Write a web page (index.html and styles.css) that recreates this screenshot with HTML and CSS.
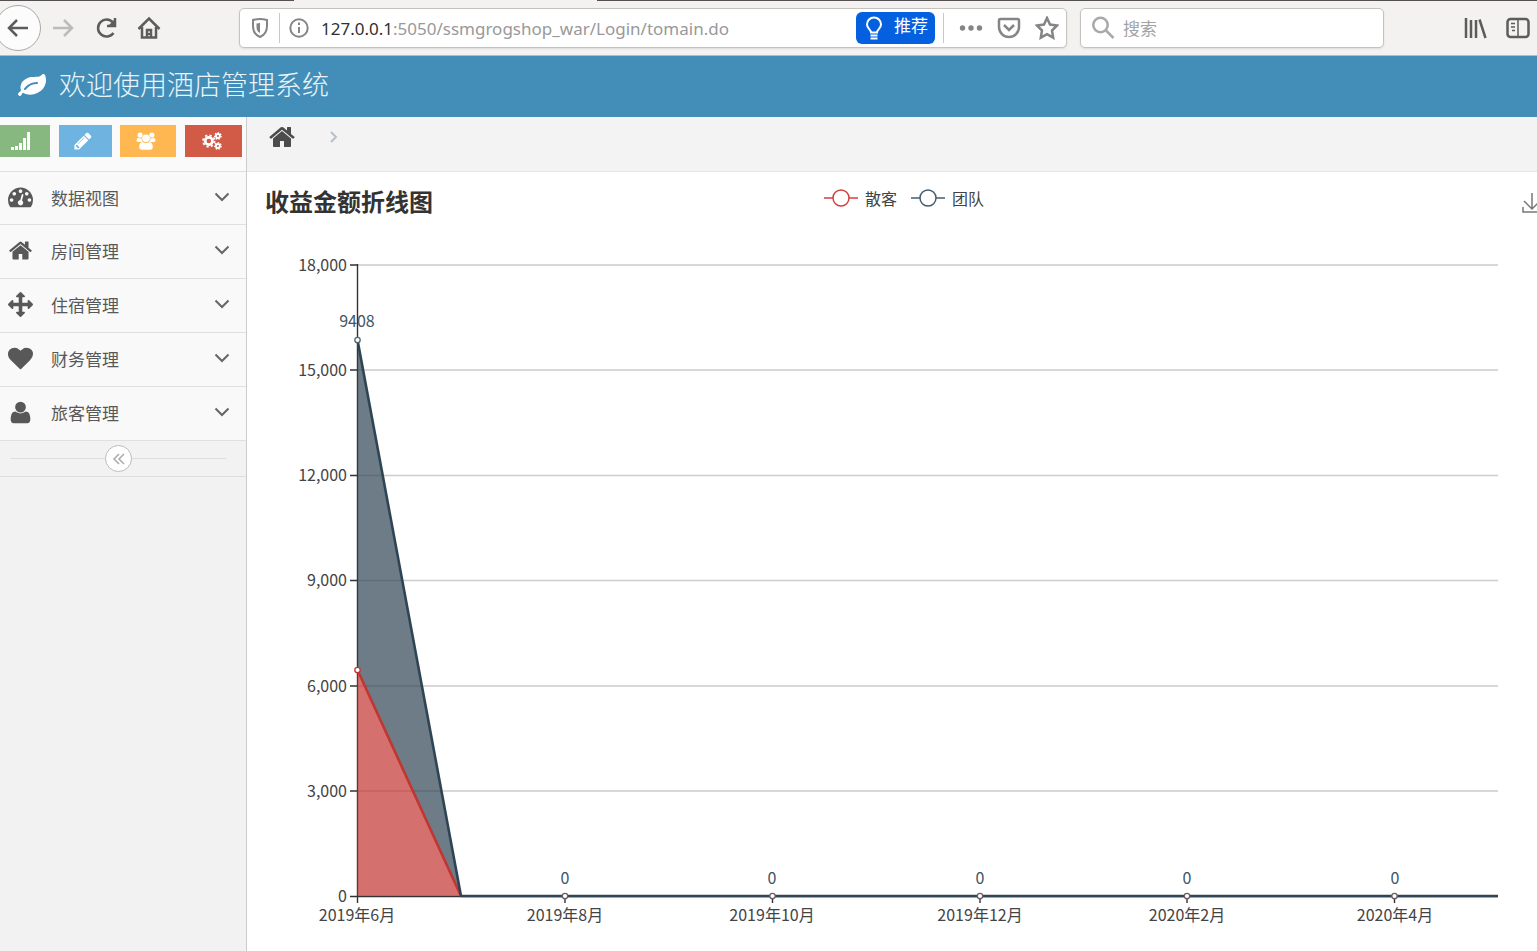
FILE: index.html
```html
<!DOCTYPE html>
<html lang="zh-CN">
<head>
<meta charset="utf-8">
<title>酒店管理系统</title>
<link rel="stylesheet" href="styles.css">
</head>
<body>
<svg class="defs" aria-hidden="true">
  <symbol id="home" viewBox="0 0 1664 1792"><path d="M1408 992v480q0 26-19 45t-45 19h-384v-384h-256v384h-384q-26 0-45-19t-19-45v-480q0-1 .5-3t.5-3l575-474 575 474q1 2 1 6zm223-69l-62 74q-8 9-21 11h-3q-13 0-21-7l-692-577-692 577q-12 8-24 7-13-2-21-11l-62-74q-8-10-7-23.5t11-21.5l719-599q32-26 76-26t76 26l244 204v-195q0-14 9-23t23-9h192q14 0 23 9t9 23v408l219 182q10 8 11 21.5t-7 23.5z"/></symbol>
  <symbol id="chevron" viewBox="0 0 16 16"><path d="M1.500 4.500 8 11l6.500-6.500" fill="none" stroke="currentColor" stroke-width="2"/></symbol>
</svg>

<div class="browser">
  <div class="tabline"><span class="tab-left"></span><span class="tab-right"></span></div>
  <div class="toolbar">
    <div class="nav-buttons">
      <button class="back" aria-label="后退"><svg viewBox="0 0 24 24"><path d="M22 12H3M11 4l-8 8 8 8"/></svg></button>
      <button class="tool forward" aria-label="前进"><svg viewBox="0 0 24 24"><path d="M2 12h19M13 4l8 8-8 8"/></svg></button>
      <button class="tool reload" aria-label="刷新"><svg viewBox="0 0 24 24"><path d="M19 6.500A8.500 8.500 0 1 0 19.500 17M21 2v8h-8"/><path class="solid" d="M21 3v7h-7z"/></svg></button>
      <button class="tool homebtn" aria-label="主页"><svg viewBox="0 0 24 24"><path d="M1.500 13 12 2.500 22.500 13M5 11v10.500h14V11"/><path d="M10 21v-7h4v7M12 17v2"/></svg></button>
    </div>
    <div class="urlbar">
      <svg class="shield" viewBox="0 0 20 22"><path d="M10 2c3 0 5 .5 7 1v6c0 6-2 9-7 11-5-2-7-5-7-11V3c2-.5 4-1 7-1z"/><path class="solid" d="M10 6c-1.500 0-2.500.2-3.500.5V10c0 3 1 5 3.500 6z"/></svg>
      <span class="divider"></span>
      <svg class="info" viewBox="0 0 22 22"><circle cx="11" cy="11" r="8.700"/><path d="M11 10v6M11 5.500v2.500"/></svg>
      <label class="url"><span class="host">127.0.0.1</span>:5050/ssmgrogshop_war/Login/tomain.do</label>
      <button class="suggest"><svg viewBox="0 0 20 24"><path d="M7 16.500c0-3-4-4-4-8a7 7 0 0 1 14 0c0 4-4 5-4 8zM6.500 19.500h7M6.500 22.500h7"/></svg><span>推荐</span></button>
      <span class="divider"></span>
      <button class="tool dots" aria-label="更多"><svg viewBox="0 0 24 24"><circle cx="3.500" cy="12" r="2.700"/><circle cx="12" cy="12" r="2.700"/><circle cx="20.500" cy="12" r="2.700"/></svg></button>
      <button class="tool grey pocket" aria-label="保存到 Pocket"><svg viewBox="0 0 24 24"><path d="M3.500 3h17q1.500 0 1.500 1.500V11a10 10 0 0 1-20 0V4.500Q2 3 3.500 3zM7 9l5 5 5-5"/></svg></button>
      <button class="tool grey star" aria-label="书签"><svg viewBox="0 0 24 24"><path d="m12 2 3 6.500 7 1-5 5 1.200 7.200L12 18.200l-6.200 3.500L7 14.500l-5-5 7-1z"/></svg></button>
    </div>
    <div class="search">
      <svg viewBox="0 0 24 24"><circle cx="9.500" cy="9" r="7.200"/><path d="m15 14.500 7.500 7.500"/></svg>
      <input type="search" aria-label="搜索" placeholder="搜索">
    </div>
    <div class="right-tools">
      <button class="tool library" aria-label="我的足迹"><svg viewBox="0 0 24 24"><path d="M3 2v20M8 4v18M13 4v18M16.500 3.500l6 18.500"/></svg></button>
      <button class="tool panel" aria-label="侧栏"><svg viewBox="0 0 24 24"><rect x="1.500" y="3" width="21" height="18" rx="3"/><path class="thin" d="M12 3v18M5 7.500h4M5 11h4M6 14.500h3"/></svg></button>
    </div>
  </div>
</div>

<header class="app-header">
  <svg viewBox="0 0 1792 1792" aria-hidden="true"><path d="M1280 704q0-26-19-45t-45-19q-172 0-318 49.500t-259.500 134-235.500 219.500q-19 21-19 45 0 26 19 45t45 19q24 0 45-19 27-24 74-71t67-66q137-124 268.500-176t313.500-52q26 0 45-19t19-45zm512-198q0 95-20 193-46 224-184.500 383t-357.500 268q-214 108-438 108-148 0-286-47-15-5-88-42t-96-37q-16 0-39.500 32t-45 70-52.500 70-60 32q-43 0-63.500-17.500t-45.500-59.500q-2-4-6-11t-5.500-10-3-9.500-1.500-13.500q0-35 31-73.500t68-65.500 68-56 31-48q0-4-14-38t-16-44q-9-51-9-104 0-115 43.500-220t119-184.500 170.500-139 204-95.500q55-18 145-25.500t179.500-9 178.500-6 163.500-24 113.500-56.500l29.500-29.500 29.500-28 27-20 36.500-16 43.500-4.500q39 0 70.500 46t47.500 112 24 124 8 96z"/></svg>
  <h1>欢迎使用酒店管理系统</h1>
</header>

<div class="layout">
  <aside class="sidebar">
    <div class="shortcuts">
      <button class="green" aria-label="统计"><svg viewBox="0 0 20 20"><path d="M0 16h3v3H0zM4 15h3v4H4zM8 12h3v7H8zM12 7h3v12h-3zM16 1h3v18h-3z"/></svg></button>
      <button class="blue" aria-label="编辑"><svg viewBox="0 0 1792 1792"><path d="M491 1536l91-91-235-235-91 91v107h128v128h107zm523-928q0-22-22-22-10 0-17 7l-542 542q-7 7-7 17 0 22 22 22 10 0 17-7l542-542q7-7 7-17zm-54-192l416 416-832 832h-416v-416zm683 96q0 53-37 90l-166 166-416-416 166-165q36-38 90-38 53 0 91 38l235 234q37 39 37 91z"/></svg></button>
      <button class="orange" aria-label="用户"><svg viewBox="0 0 22 20"><circle cx="4.500" cy="3.500" r="2.800"/><circle cx="17.500" cy="3.500" r="2.800"/><circle cx="11" cy="7" r="4.200"/><path d="M2.500 6.500Q4.500 8 6 6.700q0 3 1.500 4.300H2.200Q.5 11 .5 9.500q0-2.500 2-3zM19.500 6.500Q17.500 8 16 6.700q0 3-1.500 4.300h5.300q1.700 0 1.700-1.500 0-2.500-2-3zM7 11q4 2.500 8 0 3.500.5 3.500 6 0 2.500-2.500 2.500H6q-2.500 0-2.500-2.500 0-5.500 3.500-6z"/></svg></button>
      <button class="red" aria-label="设置"><svg class="cogs" viewBox="0 0 22 20"><circle cx="7.500" cy="10" r="4" stroke-width="3"/><circle cx="7.500" cy="10" r="6.300" stroke-width="2" stroke-dasharray="2.470 2.470"/><circle cx="17.500" cy="4.500" r="2.200" stroke-width="2"/><circle cx="17.500" cy="4.500" r="3.500" stroke-width="1.500" stroke-dasharray="1.570 1.570"/><circle cx="17.500" cy="15.500" r="2.200" stroke-width="2"/><circle cx="17.500" cy="15.500" r="3.500" stroke-width="1.500" stroke-dasharray="1.570 1.570"/></svg></button>
    </div>
    <nav>
      <ul class="menu">
        <li><a href="#"><svg class="icon" viewBox="0 0 1792 1792"><path d="M384 1152q0-53-37.500-90.500t-90.500-37.500-90.500 37.500-37.500 90.500 37.500 90.500 90.500 37.500 90.500-37.500 37.500-90.500zm192-448q0-53-37.500-90.500t-90.500-37.500-90.500 37.500-37.500 90.500 37.500 90.500 90.500 37.500 90.500-37.500 37.500-90.500zm428 481l101-382q6-26-7.500-48.500t-38.500-29.500-48 6.500-30 39.500l-101 382q-60 5-107 43.500t-63 98.500q-20 77 20 146t117 89 146-20 89-117q16-60-6-117t-72-91zm660-33q0-53-37.500-90.500t-90.500-37.500-90.500 37.500-37.500 90.500 37.500 90.500 90.500 37.500 90.500-37.500 37.500-90.500zm-640-640q0-53-37.500-90.500t-90.500-37.500-90.500 37.500-37.500 90.500 37.500 90.500 90.500 37.500 90.500-37.500 37.500-90.500zm448 192q0-53-37.500-90.500t-90.500-37.500-90.500 37.500-37.500 90.500 37.500 90.500 90.500 37.500 90.500-37.500 37.500-90.500zm320 448q0 261-141 483-19 29-54 29h-1402q-35 0-54-29-141-221-141-483 0-182 71-348t191-286 286-191 348-71 348 71 286 191 191 286 71 348z"/></svg><span>数据视图</span><svg class="arrow"><use href="#chevron"/></svg></a></li>
        <li><a href="#"><svg class="icon"><use href="#home"/></svg><span>房间管理</span><svg class="arrow"><use href="#chevron"/></svg></a></li>
        <li><a href="#"><svg class="icon" viewBox="0 0 1792 1792"><path d="M1792 896q0 26-19 45l-256 256q-19 19-45 19t-45-19-19-45v-128h-384v384h128q26 0 45 19t19 45-19 45l-256 256q-19 19-45 19t-45-19l-256-256q-19-19-19-45t19-45 45-19h128v-384h-384v128q0 26-19 45t-45 19-45-19l-256-256q-19-19-19-45t19-45l256-256q19-19 45-19t45 19 19 45v128h384v-384h-128q-26 0-45-19t-19-45 19-45l256-256q19-19 45-19t45 19l256 256q19 19 19 45t-19 45-45 19h-128v384h384v-128q0-26 19-45t45-19 45 19l256 256q19 19 19 45z"/></svg><span>住宿管理</span><svg class="arrow"><use href="#chevron"/></svg></a></li>
        <li><a href="#"><svg class="icon" viewBox="0 0 1792 1792"><path d="M896 1664q-26 0-44-18l-624-602q-10-8-27.500-26t-55.500-65.500-68-97.500-53.500-121-23.500-138q0-220 127-344t351-124q62 0 126.500 21.500t120 58 95.500 68.500 76 68q36-36 76-68t95.500-68.500 120-58 126.500-21.500q224 0 351 124t127 344q0 221-229 450l-623 600q-18 18-44 18z"/></svg><span>财务管理</span><svg class="arrow"><use href="#chevron"/></svg></a></li>
        <li><a href="#"><svg class="icon" viewBox="0 0 1792 1792"><path d="M1600 1399q0 109-62.500 187t-150.500 78h-982q-88 0-150.500-78t-62.500-187q0-85 8.500-160.500t31.500-152 58.500-131 94-89 134.500-34.500q160 128 377 128t377-128q76 0 134.500 34.500t94 89 58.500 131 31.500 152 8.500 160.500zm-320-887q0 159-112.500 271.500t-271.500 112.500-271.500-112.500-112.500-271.500 112.500-271.500 271.500-112.500 271.500 112.500 112.500 271.500z"/></svg><span>旅客管理</span><svg class="arrow"><use href="#chevron"/></svg></a></li>
      </ul>
    </nav>
    <div class="collapse">
      <button aria-label="收起菜单"><svg viewBox="0 0 16 16"><path d="M8 3 3 8l5 5M13 3 8 8l5 5"/></svg></button>
    </div>
  </aside>

  <main class="content">
    <div class="breadcrumb">
      <a href="#" aria-label="首页"><svg class="crumb-home"><use href="#home"/></svg></a>
      <svg class="crumb-sep" viewBox="0 0 10 14"><path d="m2 2 5 5-5 5"/></svg>
    </div>
    <svg class="chart" viewBox="0 0 1290 779" role="img" aria-label="收益金额折线图">
      <text class="title" x="18" y="39">收益金额折线图</text>
      <g class="legend">
        <path class="red-line" d="M577 26h34"/><circle class="red-line" cx="594" cy="26" r="8"/>
        <text x="618" y="33">散客</text>
        <path class="navy-line" d="M664 26h34"/><circle class="navy-line" cx="681" cy="26" r="8"/>
        <text x="705" y="33">团队</text>
      </g>
      <path class="download" d="M1285 21v16M1277 29l8 8 8-8M1276 35v5h18v-5"/>
      <path class="grid" d="M110 93h1141M110 198h1141M110 303.500h1141M110 408.500h1141M110 514h1141M110 619h1141"/>
      <path class="axis" d="M110.500 92v639M103 93h7M103 198h7M103 303.500h7M103 408.500h7M103 514h7M103 619h7M103 724.500h1148M318 724v7M525.500 724v7M733 724v7M940 724v7M1147.500 724v7"/>
      <path class="red-area" d="M110.500 498 214 724H110.500z"/>
      <path class="navy-area" d="M110.500 168 214 724 110.500 498z"/>
      <path class="red-series" d="M110.500 498 214 724"/>
      <path class="navy-series" d="M110.500 168 214 724H1251"/>
      <g class="ylabels">
        <text x="100" y="99">18,000</text><text x="100" y="204">15,000</text><text x="100" y="309">12,000</text>
        <text x="100" y="414">9,000</text><text x="100" y="520">6,000</text><text x="100" y="625">3,000</text><text x="100" y="730">0</text>
      </g>
      <g class="xlabels">
        <text x="110" y="749">2019年6月</text><text x="318" y="749">2019年8月</text><text x="525" y="749">2019年10月</text>
        <text x="733" y="749">2019年12月</text><text x="940" y="749">2020年2月</text><text x="1148" y="749">2020年4月</text>
      </g>
      <g class="values">
        <text x="110" y="155">9408</text><text x="318" y="712">0</text><text x="525" y="712">0</text>
        <text x="733" y="712">0</text><text x="940" y="712">0</text><text x="1148" y="712">0</text>
      </g>
      <circle class="dot red-dot" cx="110.500" cy="498" r="2.700"/>
      <circle class="dot" cx="110.500" cy="168" r="2.700"/>
      <g class="dot zero"><circle cx="318" cy="724" r="2.700"/><circle cx="525.500" cy="724" r="2.700"/><circle cx="733" cy="724" r="2.700"/><circle cx="940" cy="724" r="2.700"/><circle cx="1147.500" cy="724" r="2.700"/></g>
    </svg>
  </main>
</div>
</body>
</html>
```

FILE: styles.css
```css
* { box-sizing: border-box; }

body {
  margin: 0;
  min-height: 100vh;
  display: flex;
  flex-direction: column;
  overflow-x: hidden;
  background: #fff;
  color: #585858;
  font-family: "Noto Sans CJK SC", sans-serif;
}

button { padding: 0; border: 0; background: none; font: inherit; color: inherit; }
svg { display: block; flex: none; fill: currentColor; }
.defs { position: absolute; width: 0; height: 0; }

/* Browser chrome */
.browser { background: #f3f2f0; border-bottom: 1px solid #b9b9b7; }
.tabline { display: flex; justify-content: space-between; height: 1px; }
.tab-left { width: 294px; background: #544f50; }
.tab-right { width: calc(100% - 597px); background: #544f50; }
.toolbar { display: flex; align-items: center; height: 54px; }
.toolbar svg { width: 24px; height: 24px; fill: none; stroke: currentColor; stroke-width: 2.5; }
.nav-buttons { display: flex; align-items: center; width: 239px; color: #5d5c5b; }
.back {
  display: flex;
  align-items: center;
  justify-content: center;
  width: 46px;
  height: 46px;
  margin-left: -5px;
  border: 1px solid #aaa9a8;
  border-radius: 50%;
  background: #fcfcfc;
}
.forward { margin-left: 10px; color: #bcbbb9; }
.reload { margin-left: 19px; }
.homebtn { margin-left: 19px; }
.toolbar .solid { fill: currentColor; stroke: none; }

.urlbar, .search {
  display: flex;
  align-items: center;
  height: 40px;
  border: 1px solid #c4c3c1;
  border-radius: 5px;
  background: #fff;
  box-shadow: 0 1px 2px #dddcda;
}
.urlbar { flex: 1 1 828px; color: #858585; }
.toolbar .shield { width: 20px; height: 22px; margin-left: 10px; stroke-width: 2; }
.divider { width: 1px; height: 30px; margin-left: 9px; background: #c9c9c9; }
.suggest + .divider { margin-left: 8px; }
.toolbar .info { width: 22px; height: 22px; margin-left: 8px; stroke-width: 2; }
.url {
  flex: 1;
  margin-left: 11px;
  font: 17px "Noto Sans", sans-serif;
  color: #999;
  white-space: nowrap;
}
.host { color: #303030; }
.suggest {
  display: flex;
  align-items: center;
  gap: 10px;
  width: 79px;
  height: 32px;
  padding-left: 8px;
  border-radius: 6px;
  background: #0560df;
  color: #fff;
  font-size: 17px;
  line-height: 28px;
}
.suggest span { margin-bottom: 6px; }
.toolbar .suggest svg { width: 20px; height: 24px; stroke-width: 2; }
.toolbar .dots { margin-left: 15px; }
.toolbar .dots svg { fill: currentColor; stroke: none; }
.pocket, .star { margin-left: 14px; }
.star { margin-right: 7px; }
.search { flex: 0 0 304px; margin-left: 13px; padding-left: 10px; color: #a9a9a9; }
.search input {
  flex: 1;
  min-width: 0;
  margin: 0 0 2px 8px;
  padding: 0;
  border: 0;
  outline: 0;
  background: none;
  font: 17px "Noto Sans CJK SC", sans-serif;
}
.search input::placeholder { color: #a3a3a3; }
.right-tools { display: flex; gap: 19px; margin-left: 79px; padding-right: 7px; color: #5d5c5b; }
.toolbar .thin { stroke-width: 1.5; }

/* Application header */
.app-header {
  display: flex;
  align-items: center;
  gap: 13px;
  height: 61px;
  padding: 0 0 2px 18px;
  background: #438eb9;
  color: #fff;
}
.app-header svg { width: 28px; height: 28px; }
.app-header h1 { margin: 0 0 4px; font-size: 27px; line-height: 40px; font-weight: 300; color: #e9f4fb; }

/* Sidebar */
.layout { flex: 1; display: flex; }
.sidebar { flex: 0 0 247px; background: #f2f2f2; border-right: 1px solid #ccc; }
.shortcuts {
  display: grid;
  grid-template-columns: 50px 53px 56px 57px;
  justify-content: space-between;
  height: 54px;
  padding: 8px 4px 14px 0;
  background: #fafafa;
}
.shortcuts button { display: flex; align-items: center; justify-content: center; color: #fff; }
.shortcuts svg { width: 20px; height: 20px; }
.shortcuts .green { padding-right: 8px; background: #87b87f; }
.shortcuts .blue { padding-right: 4px; background: #6fb3e0; }
.shortcuts .orange { padding-right: 4px; background: #ffb752; }
.shortcuts .red { padding-right: 3px; background: #d15b47; }
.shortcuts .cogs { fill: none; stroke: currentColor; }
.menu { margin: 0; padding: 0; list-style: none; border-bottom: 1px solid #e0e0e0; }
.menu li { border-top: 1px solid #e0e0e0; }
.menu a {
  display: flex;
  align-items: center;
  height: 53px;
  padding: 0 16px 3px 8px;
  background: #f9f9f9;
  color: #585858;
  font-size: 17px;
  line-height: 26px;
  text-decoration: none;
}
.menu li:first-child a { height: 52px; }
.menu span { flex: 1; margin: 2px 0 0 18px; }
.icon { width: 25px; height: 25px; }
.arrow { width: 16px; height: 16px; color: #666; }
.collapse {
  display: flex;
  align-items: center;
  height: 36px;
  padding: 0 20px 0 11px;
  border-bottom: 1px solid #ddd;
}
.collapse::before, .collapse::after { content: ""; flex: 1; height: 1px; background: #ddd; }
.collapse button {
  display: flex;
  align-items: center;
  justify-content: center;
  width: 27px;
  height: 27px;
  border: 1px solid #bbb;
  border-radius: 50%;
  background: #fff;
  color: #aaa;
}
.collapse svg { width: 16px; height: 16px; fill: none; stroke: currentColor; stroke-width: 1.5; }

/* Content */
.content { flex: 1; min-width: 0; }
.breadcrumb {
  display: flex;
  align-items: center;
  gap: 34px;
  height: 55px;
  padding: 0 22px 14px;
  border-bottom: 1px solid #e5e5e5;
  background: #f3f3f3;
}
.breadcrumb a { color: #4c4c4c; }
.crumb-home { width: 26px; height: 28px; }
.crumb-sep { width: 10px; height: 14px; fill: none; stroke: #b9bfc6; stroke-width: 2; }
.chart { width: 100%; height: auto; font-size: 16px; fill: #444; }
.title { font-size: 24px; font-weight: 700; fill: #333; }
.red-line, .navy-line { fill: #fff; stroke-width: 1.5; }
.red-line { stroke: #d0413d; }
.navy-line { stroke: #465b6b; }
.download { fill: none; stroke: #777; stroke-width: 1.5; }
.grid { stroke: #ccc; stroke-width: 1.3; }
.axis { fill: none; stroke: #333; stroke-width: 1.4; }
.red-area { fill: #c23531; fill-opacity: .7; }
.navy-area { fill: #2f4554; fill-opacity: .7; }
.red-series, .navy-series { fill: none; stroke-width: 2.6; stroke-linejoin: bevel; }
.red-series { stroke: #c23531; }
.navy-series { stroke: #2f4554; }
.ylabels { text-anchor: end; }
.xlabels, .values { text-anchor: middle; }
.values { fill: #3f5565; }
.dot { fill: #fff; stroke: #526675; stroke-width: 1.3; }
.red-dot { stroke: #c23531; }
.zero { stroke: #6d5c68; }
```
